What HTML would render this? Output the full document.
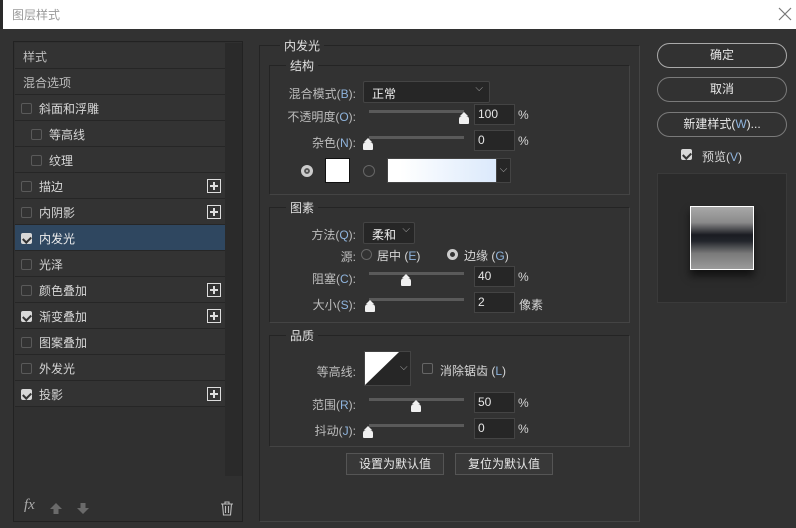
<!DOCTYPE html>
<html><head><meta charset="utf-8"><style>
*{box-sizing:border-box;margin:0;padding:0}
body{width:796px;height:528px;background:#323232;font-family:"Liberation Sans","Noto Sans CJK SC",sans-serif;font-size:12px;color:#d6d6d6;position:relative;overflow:hidden}
.a{position:absolute}
.title{left:0;top:0;width:796px;height:29px;background:#fff;border-left:3px solid #2a2a2a}
.title span{position:absolute;left:9px;top:6px;color:#9a9a9a;font-size:12px}
.lp{left:13px;top:41px;width:230px;height:481px;border:1px solid #222;background:#303030}
.row{position:absolute;left:1px;width:210px;height:26px;background:#333;border-bottom:1px solid #262626;line-height:28px}
.row.sel{background:#2f4760}
.cb{position:absolute;width:11px;height:11px;border:1px solid #5a5a5a;border-radius:2px;top:8px}
.cb.on{background:#d8d8d8;border-color:#d8d8d8}
.cb.on::after{content:"";position:absolute;left:2px;top:1px;width:4px;height:6px;border:solid #333;border-width:0 2px 2px 0;transform:rotate(45deg)}
.plus{position:absolute;left:192px;top:6px;width:14px;height:14px;border:1px solid #ddd}
.plus::before{content:"";position:absolute;left:2px;top:5px;width:8px;height:2px;background:#ddd}
.plus::after{content:"";position:absolute;left:5px;top:2px;width:2px;height:8px;background:#ddd}
.fs{border:1px solid #242424;border-right-color:#444;border-bottom-color:#444}
.lg{position:absolute;background:#323232;padding:0 4px;top:-9px;color:#e0e0e0}
.lbl{position:absolute;text-align:right;color:#bdbdbd}
.inp{position:absolute;width:41px;height:21px;background:#262626;border:1px solid #444;color:#e6e6e6;padding:2px 3px;font-size:12px}
.track{position:absolute;height:3px;background:#5a5a5a;width:95px}
.thumb{position:absolute;width:10px;height:8px;background:#f0f0f0;border-radius:3px 3px 1px 1px}
.thumb::before{content:"";position:absolute;left:1px;top:-4px;border:4px solid transparent;border-bottom-color:#f0f0f0;border-top:0}
.btn{position:absolute;border:1px solid #7a7a7a;border-radius:13px;text-align:center;line-height:23px;color:#e8e8e8;height:25px}
.btn2{position:absolute;border:1px solid #555;background:#383838;text-align:center;line-height:20px;color:#e8e8e8;height:22px}
.u{color:#8fb4dd}
</style></head><body>
<div class="a title"><span>图层样式</span>
<svg class="a" style="left:775px;top:7px" width="14" height="14"><path d="M1 1L13 13M13 1L1 13" stroke="#777" stroke-width="1.2"/></svg></div>

<div class="a lp">
<div class="row" style="top:1px"><span style="position:absolute;left:8px;color:#bdbdbd">样式</span></div>
<div class="row" style="top:27px"><span style="position:absolute;left:8px;color:#bdbdbd">混合选项</span></div>
<div class="row" style="top:53px"><i class="cb" style="left:6px"></i><span style="position:absolute;left:24px">斜面和浮雕</span></div>
<div class="row" style="top:79px"><i class="cb" style="left:16px"></i><span style="position:absolute;left:34px">等高线</span></div>
<div class="row" style="top:105px"><i class="cb" style="left:16px"></i><span style="position:absolute;left:34px">纹理</span></div>
<div class="row" style="top:131px"><i class="cb" style="left:6px"></i><span style="position:absolute;left:24px">描边</span><i class="plus"></i></div>
<div class="row" style="top:157px"><i class="cb" style="left:6px"></i><span style="position:absolute;left:24px">内阴影</span><i class="plus"></i></div>
<div class="row sel" style="top:183px"><i class="cb on" style="left:6px"></i><span style="position:absolute;left:24px;color:#eee">内发光</span></div>
<div class="row" style="top:209px"><i class="cb" style="left:6px"></i><span style="position:absolute;left:24px">光泽</span></div>
<div class="row" style="top:235px"><i class="cb" style="left:6px"></i><span style="position:absolute;left:24px">颜色叠加</span><i class="plus"></i></div>
<div class="row" style="top:261px"><i class="cb on" style="left:6px"></i><span style="position:absolute;left:24px">渐变叠加</span><i class="plus"></i></div>
<div class="row" style="top:287px"><i class="cb" style="left:6px"></i><span style="position:absolute;left:24px">图案叠加</span></div>
<div class="row" style="top:313px"><i class="cb" style="left:6px"></i><span style="position:absolute;left:24px">外发光</span></div>
<div class="row" style="top:339px"><i class="cb on" style="left:6px"></i><span style="position:absolute;left:24px">投影</span><i class="plus"></i></div>
<div style="position:absolute;left:211px;top:1px;width:17px;height:433px;background:#2a2a2a"></div>
<span style="position:absolute;left:10px;top:455px;font-style:italic;font-family:'Liberation Serif',serif;font-size:15px;color:#aaa">fx</span>
<svg style="position:absolute;left:35px;top:460px" width="14" height="13"><path d="M7 1L13 7H9.5V12H4.5V7H1Z" fill="#6a6a6a"/></svg>
<svg style="position:absolute;left:62px;top:460px" width="14" height="13"><path d="M7 12L13 6H9.5V1H4.5V6H1Z" fill="#6a6a6a"/></svg>
<svg style="position:absolute;left:206px;top:459px" width="14" height="15"><path d="M1 3H13M5 3V1H9V3M2.5 3L3.5 14H10.5L11.5 3M5.5 5V12M8.5 5V12" stroke="#bbb" fill="none" stroke-width="1.1"/></svg>
</div>

<div class="a fs" style="left:259px;top:45px;width:381px;height:477px"><span class="lg" style="left:20px">内发光</span></div>
<div class="a fs" style="left:269px;top:65px;width:361px;height:130px"><span class="lg" style="left:16px">结构</span></div>
<div class="a fs" style="left:269px;top:207px;width:361px;height:116px"><span class="lg" style="left:16px">图素</span></div>
<div class="a fs" style="left:269px;top:335px;width:361px;height:112px"><span class="lg" style="left:16px">品质</span></div>

<div class="lbl" style="left:270px;top:85px;width:86px">混合模式(<span class="u">B</span>):</div>
<div class="a" style="left:363px;top:81px;width:127px;height:22px;background:#262626;border:1px solid #444;border-radius:2px;padding:3px 8px;color:#eee">正常<span style="position:absolute;right:6px;top:1px;color:#aaa;font-size:10px">⌵</span></div>
<div class="lbl" style="left:270px;top:108px;width:86px">不透明度(<span class="u">O</span>):</div>
<div class="track" style="left:369px;top:110px;width:95px"></div><div class="thumb" style="left:459px;top:116px"></div>
<div class="inp" style="left:474px;top:104px">100</div><span class="a" style="left:518px;top:108px">%</span>
<div class="lbl" style="left:270px;top:134px;width:86px">杂色(<span class="u">N</span>):</div>
<div class="track" style="left:369px;top:136px;width:95px"></div><div class="thumb" style="left:363px;top:142px"></div>
<div class="inp" style="left:474px;top:130px">0</div><span class="a" style="left:518px;top:134px">%</span>
<div class="a" style="left:301px;top:165px;width:12px;height:12px;border-radius:50%;background:#ccc;border:3px solid #ccc;box-shadow:inset 0 0 0 2px #555"></div>
<div class="a" style="left:325px;top:158px;width:25px;height:25px;background:#fff;border:1px solid #111"></div>
<div class="a" style="left:363px;top:165px;width:12px;height:12px;border-radius:50%;border:1px solid #666"></div>
<div class="a" style="left:387px;top:158px;width:124px;height:25px;border:1px solid #444;background:linear-gradient(90deg,#fff 10%,#d6e6fb)"></div>
<div class="a" style="left:496px;top:158px;width:15px;height:25px;background:#262626;border:1px solid #444;color:#aaa;font-size:10px;text-align:center;line-height:22px">⌵</div>

<div class="lbl" style="left:270px;top:226px;width:86px">方法(<span class="u">Q</span>):</div>
<div class="a" style="left:363px;top:222px;width:52px;height:22px;background:#262626;border:1px solid #444;border-radius:2px;padding:3px 8px;color:#eee">柔和<span style="position:absolute;right:4px;top:1px;color:#aaa;font-size:10px">⌵</span></div>
<div class="lbl" style="left:270px;top:248px;width:86px">源:</div>
<div class="a" style="left:361px;top:249px;width:11px;height:11px;border-radius:50%;border:1px solid #666"></div>
<span class="a" style="left:377px;top:247px">居中 (<span class="u">E</span>)</span>
<div class="a" style="left:447px;top:249px;width:11px;height:11px;border-radius:50%;background:#333;border:3px solid #ccc"></div>
<span class="a" style="left:464px;top:247px">边缘 (<span class="u">G</span>)</span>
<div class="lbl" style="left:270px;top:270px;width:86px">阻塞(<span class="u">C</span>):</div>
<div class="track" style="left:369px;top:272px;width:95px"></div><div class="thumb" style="left:401px;top:278px"></div>
<div class="inp" style="left:474px;top:266px">40</div><span class="a" style="left:518px;top:270px">%</span>
<div class="lbl" style="left:270px;top:296px;width:86px">大小(<span class="u">S</span>):</div>
<div class="track" style="left:369px;top:298px;width:95px"></div><div class="thumb" style="left:365px;top:304px"></div>
<div class="inp" style="left:474px;top:292px">2</div><span class="a" style="left:519px;top:296px">像素</span>

<div class="lbl" style="left:270px;top:363px;width:86px">等高线:</div>
<div class="a" style="left:364px;top:351px;width:47px;height:35px;background:#262626;border:1px solid #444"></div>
<svg class="a" style="left:365px;top:352px" width="34" height="33"><path d="M0 0H34L0 33Z" fill="#fff"/></svg>
<span class="a" style="left:400px;top:362px;color:#aaa;font-size:10px">⌵</span>
<div class="a" style="left:422px;top:363px;width:11px;height:11px;border:1px solid #666;border-radius:2px"></div>
<span class="a" style="left:440px;top:362px">消除锯齿 (<span class="u">L</span>)</span>
<div class="lbl" style="left:270px;top:396px;width:86px">范围(<span class="u">R</span>):</div>
<div class="track" style="left:369px;top:398px;width:95px"></div><div class="thumb" style="left:411px;top:404px"></div>
<div class="inp" style="left:474px;top:392px">50</div><span class="a" style="left:518px;top:396px">%</span>
<div class="lbl" style="left:270px;top:422px;width:86px">抖动(<span class="u">J</span>):</div>
<div class="track" style="left:369px;top:424px;width:95px"></div><div class="thumb" style="left:363px;top:430px"></div>
<div class="inp" style="left:474px;top:418px">0</div><span class="a" style="left:518px;top:422px">%</span>

<div class="btn2" style="left:346px;top:453px;width:98px">设置为默认值</div>
<div class="btn2" style="left:455px;top:453px;width:98px">复位为默认值</div>

<div class="btn" style="left:657px;top:43px;width:130px;border-color:#aaa;border-width:1.5px">确定</div>
<div class="btn" style="left:657px;top:77px;width:130px">取消</div>
<div class="btn" style="left:657px;top:112px;width:130px">新建样式(<span class="u">W</span>)...</div>
<div class="cb on a" style="left:681px;top:149px"></div>
<span class="a" style="left:702px;top:148px">预览(<span class="u">V</span>)</span>
<div class="a" style="left:657px;top:173px;width:130px;height:130px;background:#2b2b2b;border:1px solid #3a3a3a"></div>
<div class="a" style="left:690px;top:206px;width:64px;height:64px;border:1px solid #fff;box-shadow:0 6px 8px rgba(0,0,0,.6);background:linear-gradient(#a8a8a8 0%,#8a8a8a 25%,#1a1c22 45%,#22252b 55%,#7a7a7a 75%,#9a9a9a 100%)"></div>
</body></html>
